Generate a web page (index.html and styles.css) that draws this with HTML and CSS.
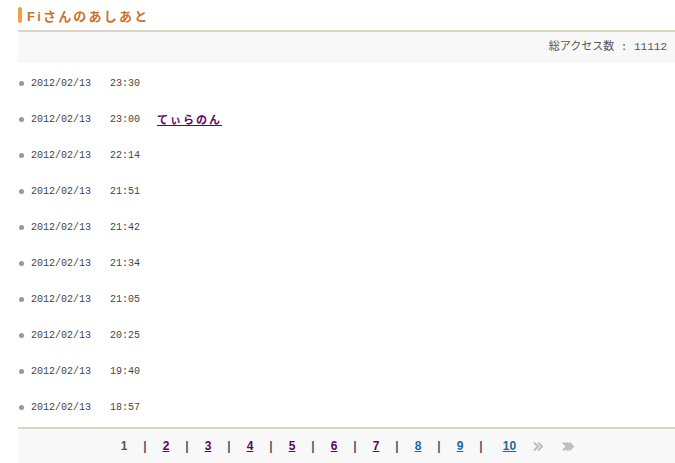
FILE: index.html
```html
<!DOCTYPE html>
<html lang="ja">
  <head>
    <meta charset="UTF-8" />
    <title>Fiさんのあしあと</title>
    <link rel="stylesheet" href="styles.css">
  </head>
  <body>
    <div class="container">
      <h2 class="title"><span class="title-bar"></span>Fiさんのあしあと</h2>
      <div class="total">総アクセス数 : 11112</div>

      <ul class="footprints">
        <li><span class="date">2012/02/13</span><span class="time">23:30</span></li>
        <li><span class="date">2012/02/13</span><span class="time">23:00</span><a href="#" class="name">てぃらのん</a></li>
        <li><span class="date">2012/02/13</span><span class="time">22:14</span></li>
        <li><span class="date">2012/02/13</span><span class="time">21:51</span></li>
        <li><span class="date">2012/02/13</span><span class="time">21:42</span></li>
        <li><span class="date">2012/02/13</span><span class="time">21:34</span></li>
        <li><span class="date">2012/02/13</span><span class="time">21:05</span></li>
        <li><span class="date">2012/02/13</span><span class="time">20:25</span></li>
        <li><span class="date">2012/02/13</span><span class="time">19:40</span></li>
        <li><span class="date">2012/02/13</span><span class="time">18:57</span></li>
      </ul>

      <div class="pager">
        <span class="page current">1</span><span class="sep">|</span>
        <a href="#" class="page">2</a><span class="sep">|</span>
        <a href="#" class="page">3</a><span class="sep">|</span>
        <a href="#" class="page">4</a><span class="sep">|</span>
        <a href="#" class="page">5</a><span class="sep">|</span>
        <a href="#" class="page">6</a><span class="sep">|</span>
        <a href="#" class="page">7</a><span class="sep">|</span>
        <a href="#" class="page new">8</a><span class="sep">|</span>
        <a href="#" class="page new">9</a><span class="sep">|</span>
        <a href="#" class="page new wide">10</a>
        <span class="arrow">
          <svg width="10" height="9" viewBox="0 0 10 9"><path d="M1 0.5 L5 4.5 L1 8.5 M5 0.5 L9 4.5 L5 8.5" fill="none" stroke="#bdbdbd" stroke-width="2"/></svg>
        </span>
        <span class="arrow last">
          <svg width="13" height="9" viewBox="0 0 13 9"><path d="M1 0.5 L5 4.5 L1 8.5 M4 0.5 L8 4.5 L4 8.5 M7 0.5 L11 4.5 L7 8.5" fill="none" stroke="#bdbdbd" stroke-width="2"/></svg>
        </span>
      </div>
    </div>
  </body>
</html>
```
FILE: styles.css
```css
body {
  margin: 0;
  background: #fff;
  font-family: "Liberation Mono", "Noto Sans CJK JP", monospace;
  color: #444;
}
.container {
  margin-left: 18px;
  width: 660px;
}
.title {
  display: flex;
  align-items: center;
  margin: 0;
  height: 30px;
  font-family: "Liberation Sans", "Noto Sans CJK JP", sans-serif;
  font-size: 13px;
  font-weight: bold;
  letter-spacing: 2.2px;
  color: #c8732c;
  border-bottom: 2px solid #ddd4c6;
}
.title-bar {
  display: inline-block;
  width: 4px;
  height: 16px;
  margin-right: 5px;
  border-radius: 2px;
  background: #f0a040;
}
.total {
  height: 31px;
  line-height: 31px;
  padding-right: 11px;
  text-align: right;
  background: #f8f8f8;
  font-size: 11px;
  color: #555;
}
.footprints {
  list-style: none;
  margin: 0;
  padding: 2px 0 0 0;
}
.footprints li {
  display: flex;
  align-items: center;
  height: 36px;
  font-size: 10px;
}
.footprints li::before {
  content: "";
  width: 5px;
  height: 5px;
  margin: 1px 7px 0 1px;
  border-radius: 50%;
  background: #999;
}
.date {
  width: 79px;
}
.time {
  width: 47px;
}
.name {
  font-family: "Liberation Sans", "Noto Sans CJK JP", sans-serif;
  font-size: 11px;
  font-weight: bold;
  letter-spacing: 2px;
  color: #660066;
}
.pager {
  display: flex;
  align-items: center;
  height: 34px;
  margin-top: 2px;
  padding-left: 95.5px;
  border-top: 2px solid #ddd4c6;
  background: #f8f8f8;
  font-family: "Liberation Sans", sans-serif;
  font-size: 12px;
  font-weight: bold;
}
.page,
.sep {
  width: 21px;
  text-align: center;
}
.page.current,
.sep {
  color: #555;
}
a.page {
  color: #660066;
}
a.page.new {
  color: #1a6898;
}
.page.wide {
  width: 36px;
}
.arrow {
  display: flex;
  justify-content: center;
  width: 21px;
}
.arrow.last {
  margin-left: 9px;
}
```
